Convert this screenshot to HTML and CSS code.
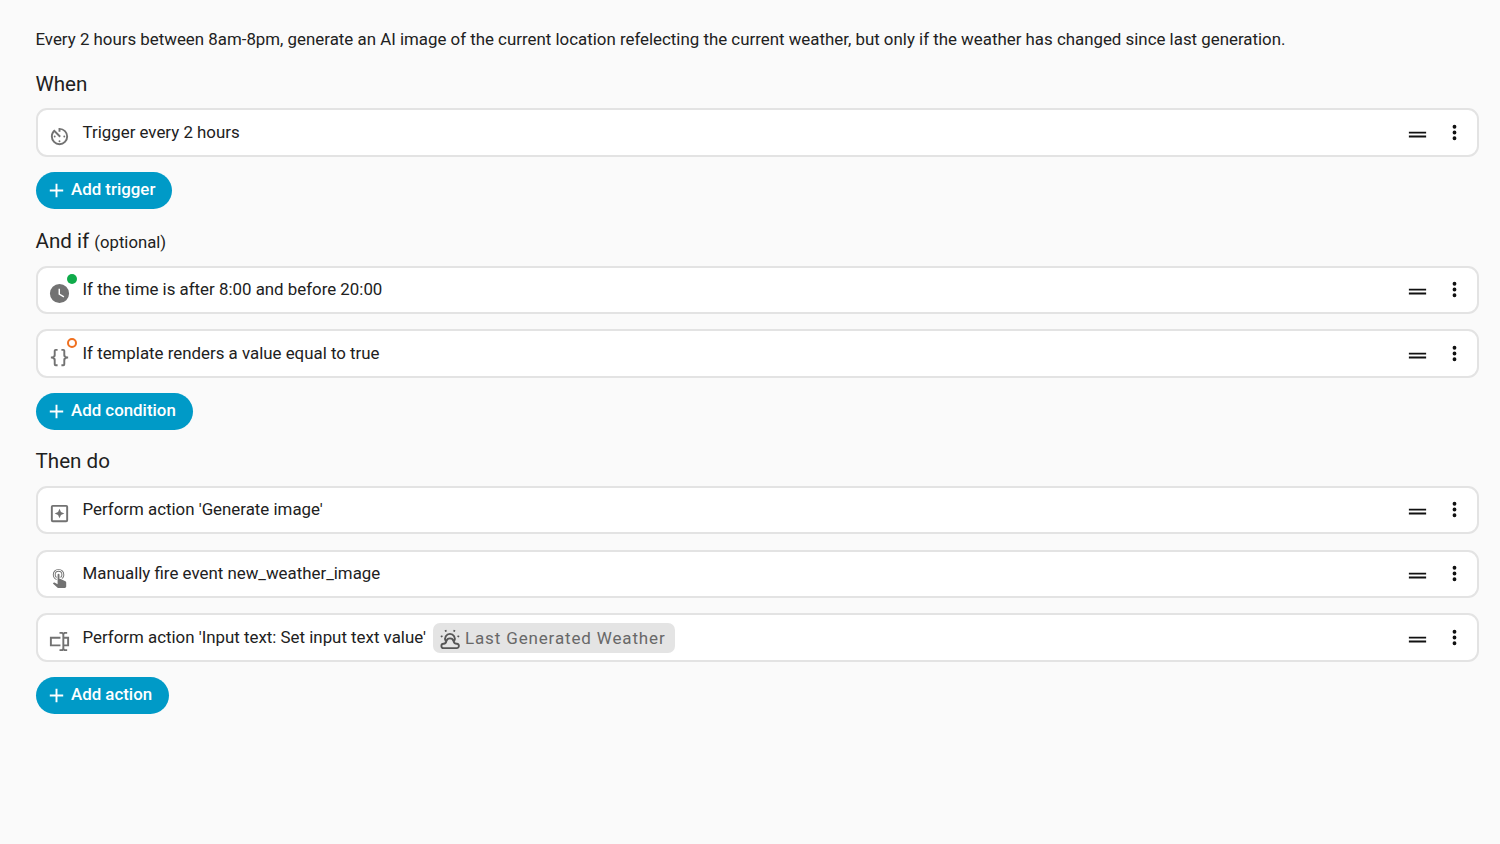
FILE: index.html
```html
<!DOCTYPE html>
<html lang="en">
<head>
  <meta charset="UTF-8">
  <meta name="viewport" content="width=device-width, initial-scale=1.0">
  <title>Automation</title>
  <link rel="stylesheet" href="styles.css">
</head>
<body>
  <!-- shared row icons -->
  <svg class="sprite" aria-hidden="true">
    <symbol id="drag" viewBox="0 0 24 24"><path d="M3,15V13H21V15H3M3,11V9H21V11H3Z"/></symbol>
    <symbol id="dots" viewBox="0 0 24 24"><path d="M12,16A2,2 0 0,1 14,18A2,2 0 0,1 12,20A2,2 0 0,1 10,18A2,2 0 0,1 12,16M12,10A2,2 0 0,1 14,12A2,2 0 0,1 12,14A2,2 0 0,1 10,12A2,2 0 0,1 12,10M12,4A2,2 0 0,1 14,6A2,2 0 0,1 12,8A2,2 0 0,1 10,6A2,2 0 0,1 12,4Z"/></symbol>
    <symbol id="plus" viewBox="0 0 24 24"><path d="M19,13H13V19H11V13H5V11H11V5H13V11H19V13Z"/></symbol>
  </svg>

  <main class="editor">
    <p class="description">Every 2 hours between 8am-8pm, generate an AI image of the current location refelecting the current weather, but only if the weather has changed since last generation.</p>

    <section class="section when">
      <h2>When</h2>
      <div class="rows">
        <div class="row">
          <span class="row-icon">
            <svg viewBox="0 0 24 24"><path d="M11,17A1,1 0 0,0 12,18A1,1 0 0,0 13,17A1,1 0 0,0 12,16A1,1 0 0,0 11,17M11,3V7H13V5.08C16.39,5.57 19,8.47 19,12A7,7 0 0,1 12,19A7,7 0 0,1 5,12C5,10.32 5.59,8.78 6.58,7.58L12,13L13.41,11.59L6.61,4.79V4.81C4.42,6.45 3,9.05 3,12A9,9 0 0,0 12,21A9,9 0 0,0 21,12A9,9 0 0,0 12,3M18,12A1,1 0 0,0 17,11A1,1 0 0,0 16,12A1,1 0 0,0 17,13A1,1 0 0,0 18,12M6,12A1,1 0 0,0 7,13A1,1 0 0,0 8,12A1,1 0 0,0 7,11A1,1 0 0,0 6,12Z"/></svg>
          </span>
          <span class="label">Trigger every 2 hours</span>
          <svg class="drag"><use href="#drag"/></svg>
          <svg class="dots"><use href="#dots"/></svg>
        </div>
      </div>
      <button class="add"><svg><use href="#plus"/></svg><span>Add trigger</span></button>
    </section>

    <section class="section and-if">
      <h2>And if <small>(optional)</small></h2>
      <div class="rows">
        <div class="row">
          <span class="row-icon">
            <svg viewBox="0 0 24 24"><path d="M12,2A10,10 0 0,0 2,12A10,10 0 0,0 12,22A10,10 0 0,0 22,12A10,10 0 0,0 12,2M16.2,16.2L11,13V7H12.5V12.2L17,14.9L16.2,16.2Z"/></svg>
            <i class="status pass"></i>
          </span>
          <span class="label">If the time is after 8:00 and before 20:00</span>
          <svg class="drag"><use href="#drag"/></svg>
          <svg class="dots"><use href="#dots"/></svg>
        </div>
        <div class="row">
          <span class="row-icon">
            <svg viewBox="0 0 24 24"><path d="M8,3A2,2 0 0,0 6,5V9A2,2 0 0,1 4,11H3V13H4A2,2 0 0,1 6,15V19A2,2 0 0,0 8,21H10V19H8V14A2,2 0 0,0 6,12A2,2 0 0,0 8,10V5H10V3M16,3A2,2 0 0,1 18,5V9A2,2 0 0,0 20,11H21V13H20A2,2 0 0,0 18,15V19A2,2 0 0,1 16,21H14V19H16V14A2,2 0 0,1 18,12A2,2 0 0,1 16,10V5H14V3H16Z"/></svg>
            <i class="status fail"></i>
          </span>
          <span class="label">If template renders a value equal to true</span>
          <svg class="drag"><use href="#drag"/></svg>
          <svg class="dots"><use href="#dots"/></svg>
        </div>
      </div>
      <button class="add"><svg><use href="#plus"/></svg><span>Add condition</span></button>
    </section>

    <section class="section then-do">
      <h2>Then do</h2>
      <div class="rows">
        <div class="row">
          <span class="row-icon">
            <svg viewBox="0 0 24 24"><path d="M19,19V5H5V19H19M19,3A2,2 0 0,1 21,5V19A2,2 0 0,1 19,21H5A2,2 0 0,1 3,19V5A2,2 0 0,1 5,3H19M12,7L13.5,10.5L17,12L13.5,13.5L12,17L10.5,13.5L7,12L10.5,10.5Z"/></svg>
          </span>
          <span class="label">Perform action 'Generate image'</span>
          <svg class="drag"><use href="#drag"/></svg>
          <svg class="dots"><use href="#dots"/></svg>
        </div>
        <div class="row">
          <span class="row-icon">
            <svg viewBox="0 0 24 24"><path d="M10,9A1,1 0 0,1 11,8A1,1 0 0,1 12,9V13.47L13.21,13.6L18.15,15.79C18.68,16.03 19,16.56 19,17.14V21.5C18.97,22.32 18.32,22.97 17.5,23H11C10.62,23 10.26,22.85 10,22.57L5.1,18.37L5.84,17.6C6.03,17.39 6.3,17.28 6.58,17.28H6.8L10,19V9M11,5A4,4 0 0,1 15,9C15,10.5 14.2,11.77 13,12.46V11.24C13.61,10.69 14,9.89 14,9A3,3 0 0,0 11,6A3,3 0 0,0 8,9C8,9.89 8.39,10.69 9,11.24V12.46C7.8,11.77 7,10.5 7,9A4,4 0 0,1 11,5M11,3A6,6 0 0,1 17,9C17,10.7 16.29,12.23 15.16,13.33L14.16,12.88C15.28,11.96 16,10.56 16,9A5,5 0 0,0 11,4A5,5 0 0,0 6,9C6,11.05 7.23,12.81 9,13.58V14.66C6.67,13.83 5,11.61 5,9A6,6 0 0,1 11,3Z"/></svg>
          </span>
          <span class="label">Manually fire event new_weather_image</span>
          <svg class="drag"><use href="#drag"/></svg>
          <svg class="dots"><use href="#dots"/></svg>
        </div>
        <div class="row">
          <span class="row-icon">
            <svg viewBox="0 0 24 24"><path d="M17,7H22V17H17V19A1,1 0 0,0 18,20H20V22H17.5C16.95,22 16,21.55 16,21C16,21.55 15.05,22 14.5,22H12V20H14A1,1 0 0,0 15,19V5A1,1 0 0,0 14,4H12V2H14.5C15.05,2 16,2.45 16,3C16,2.45 16.95,2 17.5,2H20V4H18A1,1 0 0,0 17,5V7M2,7H13V9H4V15H13V17H2V7M20,15V9H17V15H20Z"/></svg>
          </span>
          <span class="label">Perform action 'Input text: Set input text value'</span>
          <span class="chip">
            <!-- sun behind a cloud -->
            <svg viewBox="0 0 24 24">
              <path class="line" d="M5,22H19.2A2.4,2.4 0 0,0 19.4,17.2C17.4,17.2 16.4,16.2 15.9,14.4A4.1,4.1 0 0,0 8,14.4C7.8,16.2 7,17.2 5,17.2A2.4,2.4 0 0,0 5,22ZM7.3,14.2A5.3,5.3 0 1,1 16.6,14.2"/>
              <path d="M6,2.6l1.8,-.8 .9,1.8-1.8,.8zM15.3,3.6l.9-1.8 1.8,.8-.9,1.8zM1.6,8.6l1.8-.8.8,1.8-1.8,.8zM19.8,9.6l.8-1.8 1.8,.8-.8,1.8z"/>
            </svg>
            <span>Last Generated Weather</span>
          </span>
          <svg class="drag"><use href="#drag"/></svg>
          <svg class="dots"><use href="#dots"/></svg>
        </div>
      </div>
      <button class="add"><svg><use href="#plus"/></svg><span>Add action</span></button>
    </section>
  </main>
</body>
</html>
```
FILE: styles.css
```css
* {
  box-sizing: border-box;
}
body {
  margin: 0;
  min-height: 100vh;
  background-color: #fafafa;
  color: #212121;
  font-family: Roboto, sans-serif;
  font-size: 16.86px;
}
svg {
  display: block;
  flex: none;
  fill: currentColor;
}
.sprite {
  display: none;
}
.editor {
  padding: 27px 21px 0 35.5px;
}
.description {
  margin: 0;
  padding-bottom: 1px;
  line-height: 24px;
  white-space: nowrap;
}
.section {
  padding-top: 17px;
}
.then-do {
  padding-top: 16px;
}
h2 {
  margin: 0;
  height: 39.4px;
  line-height: 30px;
  font-size: 20.6px;
  font-weight: 400;
}
.and-if h2,
.then-do h2 {
  line-height: 31.4px;
}
h2 small {
  font-size: 16.7px;
}
.rows {
  display: flex;
  flex-direction: column;
  gap: 15.4px;
}
.row {
  display: flex;
  align-items: center;
  height: 48.4px;
  padding: 0 11px 0 10.5px;
  border: 2px solid #e3e3e3;
  border-radius: 11px;
  background-color: #fff;
}
.row-icon {
  position: relative;
  width: 23px;
  margin-right: 11.5px;
  padding-top: 7.5px;
  color: #727272;
}
.row-icon svg {
  width: 23px;
  height: 23px;
}
.status {
  position: absolute;
  top: -0.5px;
  right: -5.5px;
  width: 10px;
  height: 10px;
  border-radius: 50%;
}
.pass {
  background-color: #0fab4a;
}
.fail {
  border: 2px solid #f0701f;
}
.label {
  padding-bottom: 1px;
  white-space: nowrap;
}
.drag {
  width: 23px;
  height: 23px;
  margin: 4px 14.5px 0 auto;
  color: #111;
}
.dots {
  width: 23px;
  height: 23px;
  color: #111;
}
.chip {
  display: flex;
  align-items: center;
  height: 30px;
  margin-top: 1px;
  margin-left: 7px;
  padding: 0 9px 0 5.5px;
  border-radius: 7px;
  background-color: #e4e4e4;
  color: #686868;
  font-size: 17px;
  letter-spacing: 0.85px;
  white-space: nowrap;
}
.chip svg {
  width: 22px;
  height: 22px;
  margin-top: 2px;
  margin-right: 4.5px;
  color: #555;
}
.chip .line {
  fill: none;
  stroke: currentColor;
  stroke-width: 2;
}
.add {
  display: flex;
  align-items: center;
  height: 37.5px;
  margin-top: 15px;
  padding: 0 17px 0 9px;
  border: none;
  border-radius: 19px;
  background-color: #009ac7;
  color: #fff;
  font-family: inherit;
  font-size: 16.86px;
  font-weight: 500;
}
.add svg {
  width: 23px;
  height: 23px;
  margin-right: 3.5px;
}
.add span {
  padding-bottom: 3px;
}
```
